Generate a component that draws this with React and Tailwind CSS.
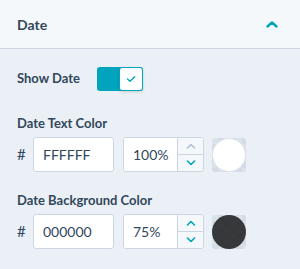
import { useState } from 'react';

function Chevron({ up, className }) {
    return (
        <svg width="10" height="6" viewBox="0 0 10 6" fill="none" className={className}>
            <path
                d={up ? 'M1.5 5L5 1.5L8.5 5' : 'M1.5 1L5 4.5L8.5 1'}
                stroke="currentColor"
                strokeWidth="1.6"
                strokeLinecap="round"
                strokeLinejoin="round"
            />
        </svg>
    );
}

function ColorRow({ hex, alpha, upDisabled, swatch }) {
    return (
        <div className="flex items-center h-[35px]">
            <span className="w-[16px] text-[15px] text-[#33475b]">#</span>
            <div className="w-[81px] h-[35px] bg-white border border-[#cbd6e2] rounded-[3px] flex items-center pl-[9px] text-[14px] text-[#33475b]">
                {hex}
            </div>
            <div className="ml-[9px] w-[81px] h-[35px] flex border border-[#cbd6e2] rounded-[3px] overflow-hidden">
                <div className="flex-1 bg-white flex items-center pl-[9px] text-[14px] text-[#33475b]">{alpha}</div>
                <div className="w-[26px] flex flex-col border-l border-[#cbd6e2] bg-[#f5f8fa]">
                    <div className="flex-1 flex items-center justify-center border-b border-[#cbd6e2]">
                        <Chevron up className={upDisabled ? 'text-[#b0c1d4]' : 'text-[#00a4bd]'} />
                    </div>
                    <div className="flex-1 flex items-center justify-center">
                        <Chevron className="text-[#00a4bd]" />
                    </div>
                </div>
            </div>
            <div className="ml-[8px] w-[34px] h-[34px] rounded-[3px] bg-[repeating-conic-gradient(#d3dce6_0%_25%,#dae2ea_0%_50%)] bg-[length:12px_12px]">
                <div className={`w-full h-full rounded-full ${swatch}`} />
            </div>
        </div>
    );
}

export default function App() {
    const [show, setShow] = useState(true);
    return (
        <div className="w-[300px] h-[269px] bg-[#eaf0f6] font-['Lato',sans-serif] text-[#33475b]">
            <div className="h-[49px] bg-[#f5f8fa] border-b border-[#cbd6e2] flex items-center justify-between pl-[17px] pr-[22px]">
                <span className="text-[14px] font-bold">Date</span>
                <svg width="12" height="7" viewBox="0 0 12 7" fill="none" className="text-[#00a4bd]">
                    <path d="M1.5 5.5L6 1.5L10.5 5.5" stroke="currentColor" strokeWidth="2.4" strokeLinecap="round" strokeLinejoin="round" />
                </svg>
            </div>

            <div className="px-[17px]">
                <div className="mt-[18px] flex items-center h-[24px]">
                    <span className="w-[80px] text-[13px] font-bold">Show Date</span>
                    <button
                        onClick={() => setShow(!show)}
                        className="w-[46px] h-[24px] flex rounded-[3px] bg-[#00a4bd]"
                    >
                        <span className="w-[22px]" />
                        <span className="w-[24px] h-[24px] bg-white border border-[#00a4bd] rounded-[3px] shadow-[0_1px_3px_rgba(0,0,0,0.15)] flex items-center justify-center">
                            <svg width="10" height="8" viewBox="0 0 10 8" fill="none">
                                <path d="M1.5 4L4 6.3L8.7 1.7" stroke="#00a4bd" strokeWidth="1.4" strokeLinecap="round" strokeLinejoin="round" />
                            </svg>
                        </span>
                    </button>
                </div>

                <div className="mt-[23px] h-[20px] flex items-center text-[13px] font-bold">Date Text Color</div>
                <div className="mt-[3px]">
                    <ColorRow hex="FFFFFF" alpha="100%" upDisabled swatch="bg-white border border-[#dfe3eb]" />
                </div>

                <div className="mt-[19px] h-[20px] flex items-center text-[13px] font-bold">Date Background Color</div>
                <div className="mt-[3px]">
                    <ColorRow hex="000000" alpha="75%" swatch="bg-black/75" />
                </div>
            </div>
        </div>
    );
}
